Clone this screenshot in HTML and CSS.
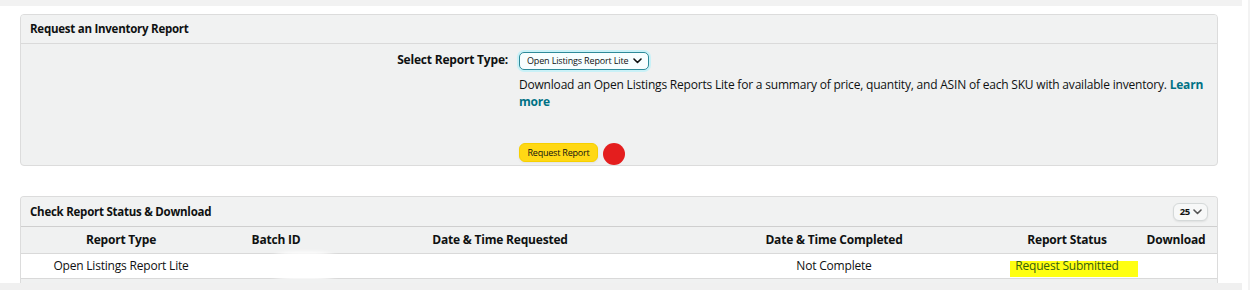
FILE: index.html
```html
<!DOCTYPE html>
<html>
<head>
<meta charset="utf-8">
<link rel="stylesheet" href="styles.css">
</head>
<body>
<div class="topbar"></div>
<main class="page">
  <section class="panel">
    <div class="panel-head">Request an Inventory Report</div>
    <div class="panel-body">
      <div class="label">Select Report Type:</div>
      <div class="content">
        <div class="select">
          <span>Open Listings Report Lite</span>
          <svg class="chev" width="9" height="6" viewBox="0 0 9 6"><path d="M1 1l3.5 3.5L8 1" fill="none" stroke="#0f1111" stroke-width="1.6" stroke-linecap="round" stroke-linejoin="round"/></svg>
        </div>
        <p class="desc">Download an Open Listings Reports Lite for a summary of price, quantity, and ASIN of each SKU with available inventory. <a class="link">Learn more</a></p>
        <div class="actions">
          <button class="btn">Request Report</button>
          <span class="dot"></span>
        </div>
      </div>
    </div>
  </section>

  <section class="panel panel-table">
    <div class="panel-head head-flex">
      <span>Check Report Status &amp; Download</span>
      <div class="pager">
        <span>25</span>
        <svg width="9" height="6" viewBox="0 0 9 6"><path d="M1 1l3.5 3.5L8 1" fill="none" stroke="#555" stroke-width="1.6" stroke-linecap="round" stroke-linejoin="round"/></svg>
      </div>
    </div>
    <div class="row thead">
      <div>Report Type</div>
      <div>Batch ID</div>
      <div>Date &amp; Time Requested</div>
      <div>Date &amp; Time Completed</div>
      <div>Report Status</div>
      <div>Download</div>
    </div>
    <div class="row tdata">
      <div>Open Listings Report Lite</div>
      <div></div>
      <div></div>
      <div>Not Complete</div>
      <div><span class="hl">Request Submitted</span></div>
      <div></div>
      <span class="smear"></span>
    </div>
    <div class="row tnext"></div>
  </section>
</main>
<div class="hscroll"></div>
<div class="vscroll"></div>
</body>
</html>
```

FILE: styles.css
```css
* { box-sizing: border-box; }
html, body { margin: 0; padding: 0; }
body {
  background: #fff;
  font-family: "Open Sans", "Noto Sans", sans-serif;
  color: #0f1111;
  font-size: 12px;
  letter-spacing: -0.2px;
  width: 1250px;
  height: 290px;
  overflow: hidden;
}
.topbar {
  height: 6px;
  background: #f2f2f2;
  width: 1242px;
}
.page {
  padding: 8px 32px 0 20px;
}
.panel {
  border: 1px solid #dcdcdc;
  border-radius: 4px;
  background: #f0f1f1;
  overflow: hidden;
}
.panel-head {
  height: 29px;
  line-height: 28px;
  padding-left: 9px;
  font-weight: 700;
  font-size: 11.5px;
  letter-spacing: -0.25px;
  background: #f1f2f2;
  border-bottom: 1px solid #dadada;
}
.panel-body {
  display: grid;
  grid-template-columns: 487px 1fr;
  column-gap: 11px;
  height: 121px;
  padding-top: 7px;
  padding-right: 5px;
}
.label {
  text-align: right;
  font-weight: 700;
  font-size: 12px;
  line-height: 18px;
}
.select {
  display: inline-flex;
  align-items: center;
  gap: 5px;
  height: 18px;
  padding: 0 6px 0 7px;
  border: 1px solid #2d8a99;
  border-radius: 5px;
  background: #f7feff;
  box-shadow: 0 0 0 2px #c9f1f7;
  font-size: 9px;
  letter-spacing: -0.15px;
  white-space: nowrap;
}
.chev { flex: none; margin-top: 1px; }
.desc {
  margin: 6px 0 0;
  line-height: 17px;
  font-size: 12px;
}
.link {
  color: #007185;
  font-weight: 700;
}
.actions {
  display: flex;
  align-items: center;
  margin-top: 30px;
}
.btn {
  height: 19px;
  width: 79px;
  padding: 0;
  font-family: inherit;
  font-size: 9px;
  letter-spacing: -0.2px;
  color: #0f1111;
  background: #ffd814;
  border: 1px solid #f7d000;
  border-radius: 6px;
  box-shadow: 0 1px 2px rgba(213,217,217,.6);
}
.dot {
  width: 22px;
  height: 22px;
  border-radius: 50%;
  background: #e41e1e;
  margin-left: 5px;
  margin-top: 3px;
}
.panel-table {
  margin-top: 30px;
  border-bottom: none;
  border-radius: 4px 4px 0 0;
  height: 120px;
}
.head-flex {
  height: 30px;
  line-height: 29px;
  display: flex;
  justify-content: space-between;
  align-items: center;
  padding-right: 9px;
  border-bottom: 1px solid #cfcfcf;
}
.pager {
  display: flex;
  align-items: center;
  gap: 3px;
  height: 18px;
  line-height: 16px;
  padding: 0 5px 0 6px;
  background: #f7f8f8;
  border: 1px solid #d5d9d9;
  border-radius: 6px;
  font-size: 9.5px;
  font-weight: 700;
  box-shadow: 0 1px 2px rgba(0,0,0,.08);
}
.row {
  display: grid;
  grid-template-columns: 200px 110px 338px 330px 136px 1fr;
  text-align: center;
  position: relative;
}
.thead {
  height: 27px;
  line-height: 26px;
  font-weight: 700;
  font-size: 12px;
  background: #f0f1f1;
  border-bottom: 1px solid #d9d9d9;
}
.tdata {
  height: 25px;
  line-height: 24px;
  background: #fff;
  border-bottom: 1px solid #d9d9d9;
}
.tnext {
  height: 20px;
  background: #f0f1f1;
}
.hl {
  position: relative;
  z-index: 0;
  white-space: nowrap;
  color: #355e10;
}
.hl::before {
  content: "";
  position: absolute;
  left: -5px;
  right: -19px;
  top: 4px;
  height: 16px;
  background: #ffff12;
  z-index: -1;
}
.smear {
  position: absolute;
  left: 246px;
  top: -2px;
  width: 74px;
  height: 28px;
  background: #fff;
  border-radius: 40%;
  filter: blur(2px);
}
.hscroll {
  position: fixed;
  left: 0;
  bottom: 0;
  width: 1242px;
  height: 7px;
  background: #f0f0f0;
}
.vscroll {
  position: fixed;
  right: 0;
  top: 0;
  width: 2px;
  height: 290px;
  background: #f3f3f3;
}
```
